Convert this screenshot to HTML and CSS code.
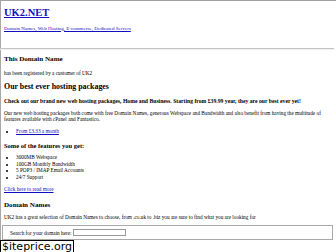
FILE: index.html
```
<!DOCTYPE html>
<html>
<head>
<meta charset="utf-8">
<link rel="stylesheet" href="styles.css">
</head>
<body>
<div class="page">
  <h1 class="logo"><a href="#">UK2.NET</a></h1>
  <p class="nav"><a href="#">Domain Names, Web Hosting, E-commerce, Dedicated Servers</a></p>
  <hr class="rule">
  <h3 class="h-small">This Domain Name</h3>
  <p class="txt t-reg">has been registered by a customer of UK2</p>
  <h2 class="h-big">Our best ever hosting packages</h2>
  <p class="txt t-bold">Check out our brand new web hosting packages, Home and Business. Starting from £39.99 year, they are our best ever yet!</p>
  <p class="txt t-new">Our new web hosting packages both come with free Domain Names, generous Webspace and Bandwidth and also benefit from having the multitude of features available with cPanel and Fantastico.</p>
  <ul class="list l-price"><li><a href="#">From £3.33 a month</a></li></ul>
  <h4 class="h-feat">Some of the features you get:</h4>
  <ul class="list l-feat">
    <li>3000MB Webspace</li>
    <li>100GB Monthly Bandwidth</li>
    <li>5 POP3 / IMAP Email Accounts</li>
    <li>24/7 Support</li>
  </ul>
  <p class="txt t-more"><a href="#">Click here to read more</a></p>
  <h3 class="h-small h-domains">Domain Names</h3>
  <p class="txt t-uk2">UK2 has a great selection of Domain Names to choose, from .co.uk to .biz you are sure to find what you are looking for</p>
  <form class="search">
    <label class="search-label">Search for your domain here:</label>
    <input class="search-input" type="text">
  </form>
</div>
<div class="watermark">$iteprice.org</div>
</body>
</html>
```
FILE: styles.css
```
html, body {
  margin: 0;
  padding: 0;
  background: #fff;
}
body {
  font-family: "Liberation Serif", "Times New Roman", serif;
  font-size: 5.25px;
  color: #000;
  width: 336px;
  height: 252px;
  overflow: hidden;
  position: relative;
}
a {
  color: #1010c0;
}
.page {
  border-top: 1px solid #a0a0a0;
  border-left: 1px solid #a8a8a8;
  padding: 0 3px 0 3px;
  min-height: 260px;
  box-sizing: border-box;
}
.page > * {
  margin: 0;
}
.logo {
  font-size: 10.5px;
  line-height: 12px;
  margin-top: 6px;
}
.nav {
  line-height: 6px;
  margin-top: 6.5px;
  font-size: 5px;
}
.rule {
  margin: 16.5px -1px 0 -4px;
  border: 0;
  border-top: 1px solid #c4c4c4;
  border-bottom: 1px solid #f0f0f0;
  height: 0;
}
.h-small {
  font-size: 7.1px;
  line-height: 7px;
  margin-top: 5.5px;
}
.txt {
  line-height: 6px;
}
.t-reg { margin-top: 7.5px; }
.h-big {
  font-size: 7.9px;
  line-height: 9px;
  margin-top: 6px;
}
.t-bold {
  font-weight: bold;
  font-size: 5.7px;
  margin-top: 7px;
}
.t-new { margin-top: 6px; }
.list {
  padding-left: 12px;
  line-height: 6px;
}
.l-price { margin-top: 6px; }
.h-feat {
  font-size: 6.5px;
  line-height: 7px;
  margin-top: 7.5px;
}
.l-feat {
  margin-top: 5.5px;
  line-height: 6.5px;
}
.t-more { margin-top: 6px; }
.h-domains { margin-top: 9.5px; }
.t-uk2 { margin-top: 5.5px; }
.search {
  margin: 5px 0 0 -2px;
  height: 15px;
  box-sizing: border-box;
  border: 1px solid #aaa;
  padding-left: 7px;
  display: flex;
  align-items: center;
  gap: 1px;
}
.search-label {
  font-size: 5.25px;
}
.search-input {
  width: 53px;
  height: 7px;
  box-sizing: border-box;
  border: 1px solid #999;
  padding: 0;
  margin: 0;
  background: #fff;
}
.watermark {
  position: absolute;
  left: 0;
  top: 240px;
  padding: 0 1px;
  border: 1px solid #000;
  border-bottom: 0;
  background: #fff;
  font-family: "DejaVu Sans", sans-serif;
  font-size: 11px;
  line-height: 11px;
  color: #000;
}
```
